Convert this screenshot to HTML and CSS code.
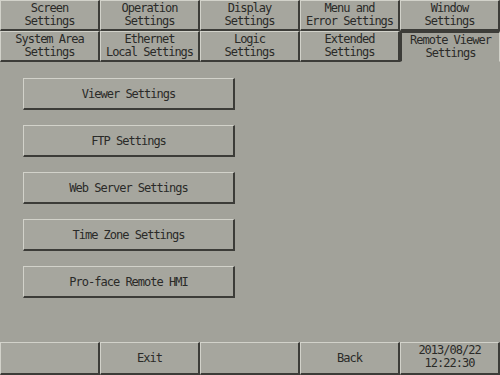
FILE: index.html
```html
<!DOCTYPE html>
<html lang="en">
<head>
    <meta charset="UTF-8">
    <meta name="viewport" content="width=device-width, initial-scale=1.0">
    <title>Remote Viewer Settings</title>
    <link rel="stylesheet" href="styles.css">
</head>
<body>
    <div class="screen">
        <div class="tabs">
            <div class="tab">Screen<br>Settings</div>
            <div class="tab">Operation<br>Settings</div>
            <div class="tab">Display<br>Settings</div>
            <div class="tab">Menu and<br>Error Settings</div>
            <div class="tab">Window<br>Settings</div>
            <div class="tab">System Area<br>Settings</div>
            <div class="tab">Ethernet<br>Local Settings</div>
            <div class="tab">Logic<br>Settings</div>
            <div class="tab">Extended<br>Settings</div>
            <div class="tab active">Remote Viewer<br>Settings</div>
        </div>

        <div class="menu">
            <div class="btn">Viewer Settings</div>
            <div class="btn">FTP Settings</div>
            <div class="btn">Web Server Settings</div>
            <div class="btn">Time Zone Settings</div>
            <div class="btn">Pro-face Remote HMI</div>
        </div>

        <div class="footer">
            <div class="key"></div>
            <div class="key">Exit</div>
            <div class="key"></div>
            <div class="key">Back</div>
            <div class="key clock">2013/08/22<br>12:22:30</div>
        </div>
    </div>
</body>
</html>
```

FILE: styles.css
```css
body {
    margin: 0;
    background-color: #a2a29a;
    font-family: "DejaVu Sans Mono", monospace;
    font-size: 12px;
    letter-spacing: -1px;
    color: #2a2a28;
}
.screen {
    width: 500px;
    height: 375px;
    display: flex;
    flex-direction: column;
}
.tabs {
    display: grid;
    grid-template-columns: repeat(5, 100px);
    grid-template-rows: 31px 31px;
}
.tab {
    display: flex;
    align-items: center;
    justify-content: center;
    text-align: center;
    line-height: 13px;
    background-color: #a6a69e;
    border-top: 1px solid #d2d2ca;
    border-left: 1px solid #d2d2ca;
    border-right: 2px solid #3c3c38;
    border-bottom: 2px solid #3c3c38;
}
.tab.active {
    background-color: #a2a29a;
    border-top: 2px solid #3c3c38;
    border-left: 2px solid #3c3c38;
    border-right: 1px solid #d2d2ca;
    border-bottom: 1px solid #a2a29a;
}
.menu {
    flex: 1;
    display: flex;
    flex-direction: column;
    gap: 15px;
    padding: 16px 0 0 23px;
}
.btn {
    width: 209px;
    height: 29px;
    display: flex;
    align-items: center;
    justify-content: center;
    background-color: #a6a69e;
    border-top: 1px solid #d2d2ca;
    border-left: 1px solid #d2d2ca;
    border-right: 2px solid #3c3c38;
    border-bottom: 2px solid #3c3c38;
}
.footer {
    display: grid;
    grid-template-columns: repeat(5, 100px);
    height: 33px;
}
.key {
    display: flex;
    align-items: center;
    justify-content: center;
    text-align: center;
    line-height: 13px;
    background-color: #a6a69e;
    border-top: 1px solid #d2d2ca;
    border-left: 1px solid #d2d2ca;
    border-right: 2px solid #3c3c38;
    border-bottom: 2px solid #3c3c38;
}
.clock {
    padding-bottom: 2px;
}
```
